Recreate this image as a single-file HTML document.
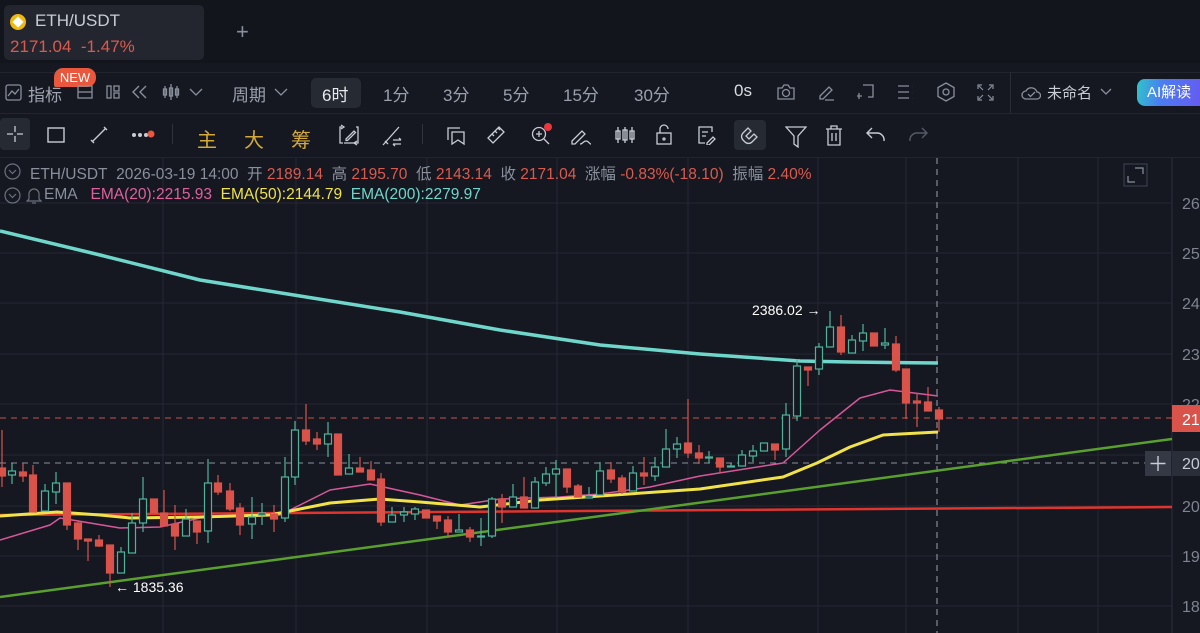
<!DOCTYPE html>
<html><head><meta charset="utf-8"><style>
*{margin:0;padding:0;box-sizing:border-box}
body{width:1200px;height:633px;background:#151821;overflow:hidden;position:relative;font-family:"Liberation Sans","Noto Sans CJK SC",sans-serif;color:#8a8f9c}
.a{position:absolute;white-space:nowrap}
.t{font-size:16px;color:#9aa0ad}
.r{color:#dc5a4d}
</style></head><body>
<div class="a" style="left:0;top:0;width:1200px;height:63px;background:#13151d"></div>
<div class="a" style="left:4px;top:5px;width:200px;height:55px;background:#23262f;border-radius:5px"></div>
<div class="a" style="left:10px;top:14px;width:16px;height:16px;border-radius:50%;background:#f0b90b"></div>
<div class="a" style="left:14px;top:18px;width:8px;height:8px;background:#fff;transform:rotate(45deg)"></div>
<div class="a" style="left:35px;top:11px;font-size:17px;color:#c8ccd4">ETH/USDT</div>
<div class="a r" style="left:10px;top:37px;font-size:17px">2171.04 &nbsp;-1.47%</div>
<div class="a" style="left:236px;top:19px;font-size:22px;color:#8a8f9c;font-weight:300">+</div>
<div class="a" style="left:0;top:72px;width:1200px;height:1px;background:#22252e"></div>
<div class="a" style="left:0;top:113px;width:1200px;height:1px;background:#22252e"></div>
<div class="a" style="left:0;top:157px;width:1200px;height:1px;background:#22252e"></div>
<!-- row1 -->
<svg class="a" style="left:5px;top:84px" width="17" height="17" viewBox="0 0 17 17" fill="none" stroke="#8a8f9c" stroke-width="1.3"><rect x="1" y="1" width="15" height="15" rx="2"/><path d="M3 12l4-5 3 3 4-5"/></svg>
<div class="a t" style="left:28px;top:81px;font-size:17px;color:#a0a5b1">指标</div>
<div class="a" style="left:54px;top:68px;width:42px;height:19px;background:#e9573d;border-radius:9px 9px 9px 2px;color:#fff;font-size:13px;text-align:center;line-height:19px">NEW</div>
<svg class="a" style="left:77px;top:84px" width="16" height="16" fill="none" stroke="#8a8f9c" stroke-width="1.3"><rect x="1" y="2" width="14" height="12"/><path d="M1 8h14"/></svg>
<svg class="a" style="left:106px;top:85px" width="14" height="14" fill="none" stroke="#8a8f9c" stroke-width="1.3"><rect x="1" y="1" width="4" height="12"/><rect x="8" y="1" width="5" height="5"/><rect x="8" y="8" width="5" height="5"/></svg>
<svg class="a" style="left:131px;top:84px" width="18" height="16" fill="none" stroke="#8a8f9c" stroke-width="1.4"><path d="M8 2L2 8l6 6M15 2l-6 6 6 6"/></svg>
<svg class="a" style="left:162px;top:83px" width="20" height="18" fill="none" stroke="#8a8f9c" stroke-width="1.3"><path d="M3 3v12M9 1v16M15 3v12"/><rect x="1.5" y="6" width="3" height="6"/><rect x="7.5" y="5" width="3" height="8"/><rect x="13.5" y="6" width="3" height="6"/></svg>
<svg class="a" style="left:189px;top:88px" width="14" height="9" fill="none" stroke="#8a8f9c" stroke-width="1.3"><path d="M1 1l6 6 6-6"/></svg>
<div class="a t" style="left:232px;top:81px;font-size:17px">周期</div>
<svg class="a" style="left:274px;top:88px" width="14" height="9" fill="none" stroke="#8a8f9c" stroke-width="1.3"><path d="M1 1l6 6 6-6"/></svg>
<div class="a" style="left:311px;top:78px;width:50px;height:30px;background:#262a33;border-radius:5px"></div>
<div class="a" style="left:322px;top:81px;font-size:17px;color:#e6e8ec">6时</div>
<div class="a t" style="left:383px;top:81px;font-size:17px">1分</div>
<div class="a t" style="left:443px;top:81px;font-size:17px">3分</div>
<div class="a t" style="left:503px;top:81px;font-size:17px">5分</div>
<div class="a t" style="left:563px;top:81px;font-size:17px">15分</div>
<div class="a t" style="left:634px;top:81px;font-size:17px">30分</div>
<div class="a" style="left:734px;top:81px;font-size:17px;color:#d8dbe0">0s</div>
<svg class="a" style="left:776px;top:83px" width="20" height="18" fill="none" stroke="#8a8f9c" stroke-width="1.3"><path d="M2 5h4l2-3h4l2 3h4v11H2z"/><circle cx="10" cy="10" r="3.5"/></svg>
<svg class="a" style="left:817px;top:83px" width="18" height="18" fill="none" stroke="#8a8f9c" stroke-width="1.3"><path d="M3 13l9-9 3 3-9 9H3zM8 17h9"/></svg>
<svg class="a" style="left:857px;top:83px" width="18" height="18" fill="none" stroke="#8a8f9c" stroke-width="1.3"><path d="M6 2h10v12h-5M2 10v6M-1 13h6"/></svg>
<svg class="a" style="left:897px;top:84px" width="18" height="16" fill="none" stroke="#8a8f9c" stroke-width="1.3"><path d="M1 2h11M1 8h11M1 14h11M15 2v.1M15 8v.1M15 14v.1"/></svg>
<svg class="a" style="left:936px;top:82px" width="20" height="20" fill="none" stroke="#8a8f9c" stroke-width="1.3"><path d="M10 1l8 4.5v9L10 19l-8-4.5v-9z"/><circle cx="10" cy="10" r="3"/></svg>
<svg class="a" style="left:977px;top:84px" width="17" height="17" fill="none" stroke="#8a8f9c" stroke-width="1.2"><path d="M1 5V1h4M12 1h4v4M16 12v4h-4M5 16H1v-4M2 2l4 4M15 2l-4 4M15 15l-4-4M2 15l4-4"/></svg>
<div class="a" style="left:1010px;top:72px;width:1px;height:41px;background:#2a2d36"></div>
<svg class="a" style="left:1021px;top:84px" width="20" height="16" fill="none" stroke="#8a8f9c" stroke-width="1.3"><path d="M5 15a4 4 0 0 1 0-8 6 6 0 0 1 11 1 3.5 3.5 0 0 1 0 7z"/><path d="M7 10l2.5 2.5L14 8"/></svg>
<div class="a" style="left:1047px;top:82px;font-size:15px;color:#c8ccd4">未命名</div>
<svg class="a" style="left:1100px;top:88px" width="12" height="8" fill="none" stroke="#8a8f9c" stroke-width="1.3"><path d="M1 1l5 5 5-5"/></svg>
<div class="a" style="left:1137px;top:79px;width:70px;height:27px;border-radius:8px 0 0 8px;background:linear-gradient(100deg,#2fc6c9 0%,#4a7df2 35%,#6b55f0 100%);color:#fff;font-size:15px;line-height:27px;padding-left:10px">AI解读</div>
<!-- row2 -->
<div class="a" style="left:0;top:118px;width:30px;height:32px;background:#262a33;border-radius:4px"></div>
<svg class="a" style="left:6px;top:125px" width="18" height="18" fill="none" stroke="#c8ccd4" stroke-width="1.3"><path d="M9 1v6M9 11v6M1 9h6M11 9h6"/></svg>
<svg class="a" style="left:47px;top:127px" width="18" height="16" fill="none" stroke="#c8ccd4" stroke-width="1.4"><rect x="1" y="1" width="16" height="14"/></svg>
<svg class="a" style="left:90px;top:126px" width="18" height="18" fill="none" stroke="#c8ccd4" stroke-width="1.4"><path d="M2 16L16 2M1 14l3 3M14 1l3 3"/></svg>
<svg class="a" style="left:131px;top:128px" width="24" height="12"><circle cx="3" cy="7" r="2" fill="#c8ccd4"/><circle cx="9" cy="7" r="2" fill="#c8ccd4"/><circle cx="15" cy="7" r="2" fill="#c8ccd4"/><circle cx="20" cy="6" r="3.5" fill="#e9573d"/></svg>
<div class="a" style="left:172px;top:124px;width:1px;height:20px;background:#30333c"></div>
<div class="a" style="left:197px;top:124px;font-size:20px;color:#d4a93a">主</div>
<div class="a" style="left:244px;top:124px;font-size:20px;color:#d4a93a">大</div>
<div class="a" style="left:291px;top:124px;font-size:20px;color:#d4a93a">筹</div>
<svg class="a" style="left:338px;top:124px" width="22" height="22" fill="none" stroke="#c8ccd4" stroke-width="1.3"><path d="M4 3h-2v16h3M18 3h2v16h-14"/><path d="M8 15l8-8 1.5 1.5-8 8H8zM3 1l3 2-3 2M19 17l-3 2 3 2"/></svg>
<svg class="a" style="left:381px;top:125px" width="22" height="22" fill="none" stroke="#c8ccd4" stroke-width="1.3"><path d="M2 20L18 2M4 16l3 3M12 15h8M12 19h8M18 13l2 2M14 21l-2-2"/></svg>
<div class="a" style="left:422px;top:124px;width:1px;height:20px;background:#30333c"></div>
<svg class="a" style="left:446px;top:126px" width="20" height="20" fill="none" stroke="#c8ccd4" stroke-width="1.3"><path d="M2 14V2h12M6 6h12v12l-6-4-6 4z"/></svg>
<svg class="a" style="left:486px;top:125px" width="20" height="20" fill="none" stroke="#c8ccd4" stroke-width="1.3"><path d="M2 13L13 2l5 5L7 18z M6 9l2 2M9 6l2 2M12 3l2 2"/></svg>
<svg class="a" style="left:530px;top:122px" width="24" height="24" fill="none" stroke="#c8ccd4" stroke-width="1.3"><circle cx="9" cy="12" r="6.5"/><path d="M14 17l5 5M6 12h6M9 9v6"/><circle cx="18" cy="5" r="4" fill="#e9373d" stroke="none"/></svg>
<svg class="a" style="left:570px;top:126px" width="22" height="20" fill="none" stroke="#c8ccd4" stroke-width="1.3"><path d="M2 15L12 5l3 3-10 10H2zM10 18c3 0 3-3 6-3s3 3 5 3"/></svg>
<svg class="a" style="left:614px;top:126px" width="22" height="18" fill="none" stroke="#c8ccd4" stroke-width="1.3"><path d="M4 1v16M11 1v16M18 1v16"/><rect x="2" y="5" width="4" height="8"/><rect x="9" y="4" width="4" height="10"/><rect x="16" y="5" width="4" height="8"/></svg>
<svg class="a" style="left:655px;top:124px" width="18" height="22" fill="none" stroke="#c8ccd4" stroke-width="1.3"><rect x="2" y="9" width="14" height="11"/><path d="M5 9V5a4 4 0 0 1 8 0"/><circle cx="9" cy="15" r="1"/></svg>
<svg class="a" style="left:697px;top:125px" width="20" height="20" fill="none" stroke="#c8ccd4" stroke-width="1.3"><path d="M15 7V2H2v16h6M5 7h6M5 11h4"/><path d="M10 18l6-6 2 2-6 6h-2z"/></svg>
<div class="a" style="left:734px;top:120px;width:32px;height:30px;background:#262a33;border-radius:4px"></div>
<svg class="a" style="left:740px;top:125px" width="20" height="20" fill="none" stroke="#c8ccd4" stroke-width="1.3"><path d="M8 3L3 8a5 5 0 0 0 0 7l2 2a5 5 0 0 0 7 0l5-5-3-3-5 5-3-3 5-5z"/></svg>
<svg class="a" style="left:785px;top:126px" width="22" height="22" fill="none" stroke="#c8ccd4" stroke-width="1.3"><path d="M1 1h20l-8 9v11l-4-3V10z"/></svg>
<svg class="a" style="left:825px;top:124px" width="18" height="22" fill="none" stroke="#c8ccd4" stroke-width="1.3"><path d="M1 5h16M6 5V2h6v3M3 5v16h12V5M7 9v8M11 9v8"/></svg>
<svg class="a" style="left:866px;top:127px" width="20" height="16" fill="none" stroke="#c8ccd4" stroke-width="1.4"><path d="M6 1L1 6l5 5M1 6h10a7 7 0 0 1 7 8"/></svg>
<svg class="a" style="left:908px;top:127px" width="20" height="16" fill="none" stroke="#555a66" stroke-width="1.4"><path d="M14 1l5 5-5 5M19 6H9a7 7 0 0 0-7 8"/></svg>
<!-- chart -->
<svg class="a" style="left:0;top:158px" width="1200" height="475" viewBox="0 158 1200 475">
<g stroke="#252833" stroke-width="1">
<path d="M0 203H1172M0 253H1172M0 303H1172M0 354H1172M0 404H1172M0 455H1172M0 506H1172M0 556H1172M0 606H1172"/>
<path d="M163 158V633M296 158V633M427 158V633M557 158V633M688 158V633M818 158V633M906 158V633M1018 158V633M1098 158V633"/>
</g>
<path d="M1172 158V633" stroke="#2c2f3a"/>
<g fill="#7f8490" font-size="16" font-family="Liberation Sans,sans-serif">
<text x="1182" y="209">26</text><text x="1182" y="259">25</text><text x="1182" y="309">24</text><text x="1182" y="360">23</text><text x="1182" y="410">22</text><text x="1182" y="512">20</text><text x="1182" y="562">19</text><text x="1182" y="612">18</text>
</g>
<path d="M0 418H1172" stroke="#c4524a" stroke-dasharray="6 5"/>
<path d="M0 463H1145" stroke="#8a8f9c" stroke-dasharray="6 5"/>
<path d="M937 158V633" stroke="#9aa0ad" stroke-dasharray="6 5"/>
<g fill="none" stroke-linejoin="round">
<path d="M0 231L100 255L200 280L300 296L400 312L500 330L600 345L700 354L800 361L850 362L938 363" stroke="#6fd6cb" stroke-width="3.5"/>
<path d="M0 515L1172 507" stroke="#e0352f" stroke-width="2.5"/>
<path d="M0 597L1172 439" stroke="#5aa02e" stroke-width="2.5"/>
<path d="M0 540L50 525L60 518L120 528L160 527L200 518L240 516L280 515L330 490L370 484L420 495L460 505L500 499L560 497L600 494L650 487L700 476L783 463L820 430L860 398L890 390L938 396" stroke="#d8579b" stroke-width="1.5"/>
<path d="M0 516L57 512L100 515L130 518L200 517L270 515L300 509L330 503L380 499L420 502L480 507L540 500L600 496L700 489L783 477L817 463L850 447L883 435L938 432" stroke="#f2e24a" stroke-width="3"/>
</g>
<g stroke-width="1.2">
<g stroke="#d9534a" fill="#d9534a">
<path d="M2 430V487M23 463V482M33 465V512M67 483V530M78 520V550M88 539V561M99 535V547M110 545V587M154 499V513M164 490V526M175 505V550M197 521V544M218 475V495M230 483V511M240 503V535M274 505V532M306 404V445M317 432V450M338 434V475M360 457V472M371 461V480M381 473V526M426 510V518M437 516V529M448 516V537M470 527V542M502 494V523M524 477V508M567 469V493M578 484V497M611 462V483M622 475V494M644 457V485M688 399V458M699 445V464M720 458V473M775 444V460M808 367V386M841 315V355M874 333V346M896 336V372M906 369V419M917 393V427M928 387V411M939 407V432"/>
<rect x="-1.5" y="468" width="7" height="8"/><rect x="19.5" y="472" width="7" height="4"/><rect x="29.5" y="475" width="7" height="37"/><rect x="63.5" y="483" width="7" height="42"/><rect x="74.5" y="523" width="7" height="16"/><rect x="84.5" y="539" width="7" height="2"/><rect x="95.5" y="540" width="7" height="6"/><rect x="106.5" y="545" width="7" height="28"/><rect x="150.5" y="499" width="7" height="14"/><rect x="160.5" y="513" width="7" height="13"/><rect x="171.5" y="524" width="7" height="12"/><rect x="193.5" y="521" width="7" height="11"/><rect x="214.5" y="483" width="7" height="9"/><rect x="226.5" y="491" width="7" height="18"/><rect x="236.5" y="508" width="7" height="17"/><rect x="270.5" y="514" width="7" height="5"/><rect x="302.5" y="430" width="7" height="11"/><rect x="313.5" y="439" width="7" height="5"/><rect x="334.5" y="434" width="7" height="41"/><rect x="356.5" y="468" width="7" height="4"/><rect x="367.5" y="470" width="7" height="10"/><rect x="377.5" y="479" width="7" height="43"/><rect x="422.5" y="510" width="7" height="8"/><rect x="433.5" y="516" width="7" height="5"/><rect x="444.5" y="520" width="7" height="12"/><rect x="466.5" y="530" width="7" height="7"/><rect x="498.5" y="499" width="7" height="8"/><rect x="520.5" y="497" width="7" height="11"/><rect x="563.5" y="469" width="7" height="18"/><rect x="574.5" y="486" width="7" height="11"/><rect x="607.5" y="470" width="7" height="9"/><rect x="618.5" y="478" width="7" height="14"/><rect x="640.5" y="473" width="7" height="3"/><rect x="684.5" y="443" width="7" height="10"/><rect x="695.5" y="453" width="7" height="5"/><rect x="716.5" y="458" width="7" height="9"/><rect x="771.5" y="444" width="7" height="6"/><rect x="804.5" y="367" width="7" height="3"/><rect x="837.5" y="327" width="7" height="25"/><rect x="870.5" y="333" width="7" height="13"/><rect x="892.5" y="344" width="7" height="26"/><rect x="902.5" y="369" width="7" height="34"/><rect x="913.5" y="401" width="7" height="2"/><rect x="924.5" y="402" width="7" height="9"/><rect x="935.5" y="410" width="7" height="9"/>
</g>
<g stroke="#4fb39a" fill="#151821">
<path d="M12 463V471M12 475V484M45 484V491M56 472V483M56 492V504M121 547V552M132 513V523M143 477V499M143 523V532M186 509V519M208 459V483M208 531V543M252 497V517M252 524V539M262 503V513M262 515V525M285 457V477M285 518V522M295 421V430M295 477V485M328 422V434M328 444V457M349 454V468M392 507V515M404 507V512M404 515V522M415 507V509M415 514V520M459 514V530M481 518V536M481 537V546M492 497V499M492 536V538M513 484V497M535 477V482M546 467V474M546 483V486M556 460V469M556 474V498M589 487V496M600 462V471M633 466V473M655 457V467M655 476V481M666 429V449M677 437V444M677 449V458M709 451V457M709 458V463M731 463V466M742 450V455M753 445V451M753 456V462M786 403V415M786 449V457M797 359V366M797 416V421M819 343V347M819 369V375M830 311V327M852 335V340M863 324V333M863 341V351M885 328V343M885 345V349"/>
<rect x="8.5" y="471" width="7" height="4"/><rect x="41.5" y="491" width="7" height="20"/><rect x="52.5" y="483" width="7" height="9"/><rect x="117.5" y="552" width="7" height="21"/><rect x="128.5" y="523" width="7" height="30"/><rect x="139.5" y="499" width="7" height="24"/><rect x="182.5" y="519" width="7" height="17"/><rect x="204.5" y="483" width="7" height="48"/><rect x="248.5" y="517" width="7" height="7"/><rect x="258.5" y="513" width="7" height="2"/><rect x="281.5" y="477" width="7" height="41"/><rect x="291.5" y="430" width="7" height="47"/><rect x="324.5" y="434" width="7" height="10"/><rect x="345.5" y="468" width="7" height="6"/><rect x="388.5" y="515" width="7" height="7"/><rect x="400.5" y="512" width="7" height="3"/><rect x="411.5" y="509" width="7" height="5"/><rect x="455.5" y="530" width="7" height="2"/><rect x="477.5" y="536" width="7" height="1"/><rect x="488.5" y="499" width="7" height="37"/><rect x="509.5" y="497" width="7" height="10"/><rect x="531.5" y="482" width="7" height="26"/><rect x="542.5" y="474" width="7" height="9"/><rect x="552.5" y="469" width="7" height="5"/><rect x="585.5" y="496" width="7" height="2"/><rect x="596.5" y="471" width="7" height="24"/><rect x="629.5" y="473" width="7" height="18"/><rect x="651.5" y="467" width="7" height="9"/><rect x="662.5" y="449" width="7" height="18"/><rect x="673.5" y="444" width="7" height="5"/><rect x="705.5" y="457" width="7" height="1"/><rect x="727.5" y="466" width="7" height="1"/><rect x="738.5" y="455" width="7" height="11"/><rect x="749.5" y="451" width="7" height="5"/><rect x="760.5" y="443" width="7" height="8"/><rect x="782.5" y="415" width="7" height="34"/><rect x="793.5" y="366" width="7" height="50"/><rect x="815.5" y="347" width="7" height="22"/><rect x="826.5" y="327" width="7" height="20"/><rect x="848.5" y="340" width="7" height="13"/><rect x="859.5" y="333" width="7" height="8"/><rect x="881.5" y="343" width="7" height="2"/>
</g>
</g>
<text x="752" y="315" fill="#fff" font-size="14" font-family="Liberation Sans,sans-serif">2386.02 →</text>
<text x="115" y="592" fill="#fff" font-size="14" font-family="Liberation Sans,sans-serif">← 1835.36</text>
<rect x="1172" y="405" width="28" height="27" fill="#d9534a"/>
<path d="M1166 418h6" stroke="#d9534a"/>
<text x="1182" y="425" fill="#fff" font-size="16" font-family="Liberation Sans,sans-serif">21</text>
<rect x="1145" y="451" width="26" height="25" fill="#353945"/>
<path d="M1158 456v15M1150.5 463.5h15" stroke="#c8ccd4" stroke-width="1.4"/>
<rect x="1172" y="451" width="28" height="25" fill="#2a2e38"/>
<text x="1182" y="469" fill="#c8ccd4" font-size="16" font-family="Liberation Sans,sans-serif">20</text>
<rect x="1124" y="164" width="23" height="22" fill="none" stroke="#3a3e4a" stroke-width="1.2"/>
<path d="M1135 168h8v6M1128 176v6h7" stroke="#8a8f9c" fill="none" stroke-width="1.2"/>
</svg>
<!-- legend -->
<svg class="a" style="left:4px;top:163px" width="17" height="17" fill="none" stroke="#6c717d" stroke-width="1.2"><circle cx="8.5" cy="8.5" r="7.5"/><path d="M5 7l3.5 3.5L12 7"/></svg>
<div class="a" style="left:30px;top:162px;font-size:15.5px;color:#8a8f9c">ETH/USDT&nbsp; 2026-03-19 14:00&nbsp; 开 <span class="r">2189.14</span>&nbsp; 高 <span class="r">2195.70</span>&nbsp; 低 <span class="r">2143.14</span>&nbsp; 收 <span class="r">2171.04</span>&nbsp; 涨幅 <span class="r">-0.83%(-18.10)</span>&nbsp; 振幅 <span class="r">2.40%</span></div>
<svg class="a" style="left:4px;top:187px" width="17" height="17" fill="none" stroke="#6c717d" stroke-width="1.2"><circle cx="8.5" cy="8.5" r="7.5"/><path d="M5 7l3.5 3.5L12 7"/></svg>
<svg class="a" style="left:26px;top:187px" width="16" height="17" fill="none" stroke="#6c717d" stroke-width="1.2"><path d="M3 12V7a5 5 0 0 1 10 0v5l2 2H1zM6 16h4"/></svg>
<div class="a" style="left:44px;top:186px;font-size:15.5px;color:#8a8f9c">EMA&nbsp;&nbsp; <span style="color:#e0609f">EMA(20):2215.93</span>&nbsp; <span style="color:#f0e24a">EMA(50):2144.79</span>&nbsp; <span style="color:#6fd6cb">EMA(200):2279.97</span></div>
</body></html>
